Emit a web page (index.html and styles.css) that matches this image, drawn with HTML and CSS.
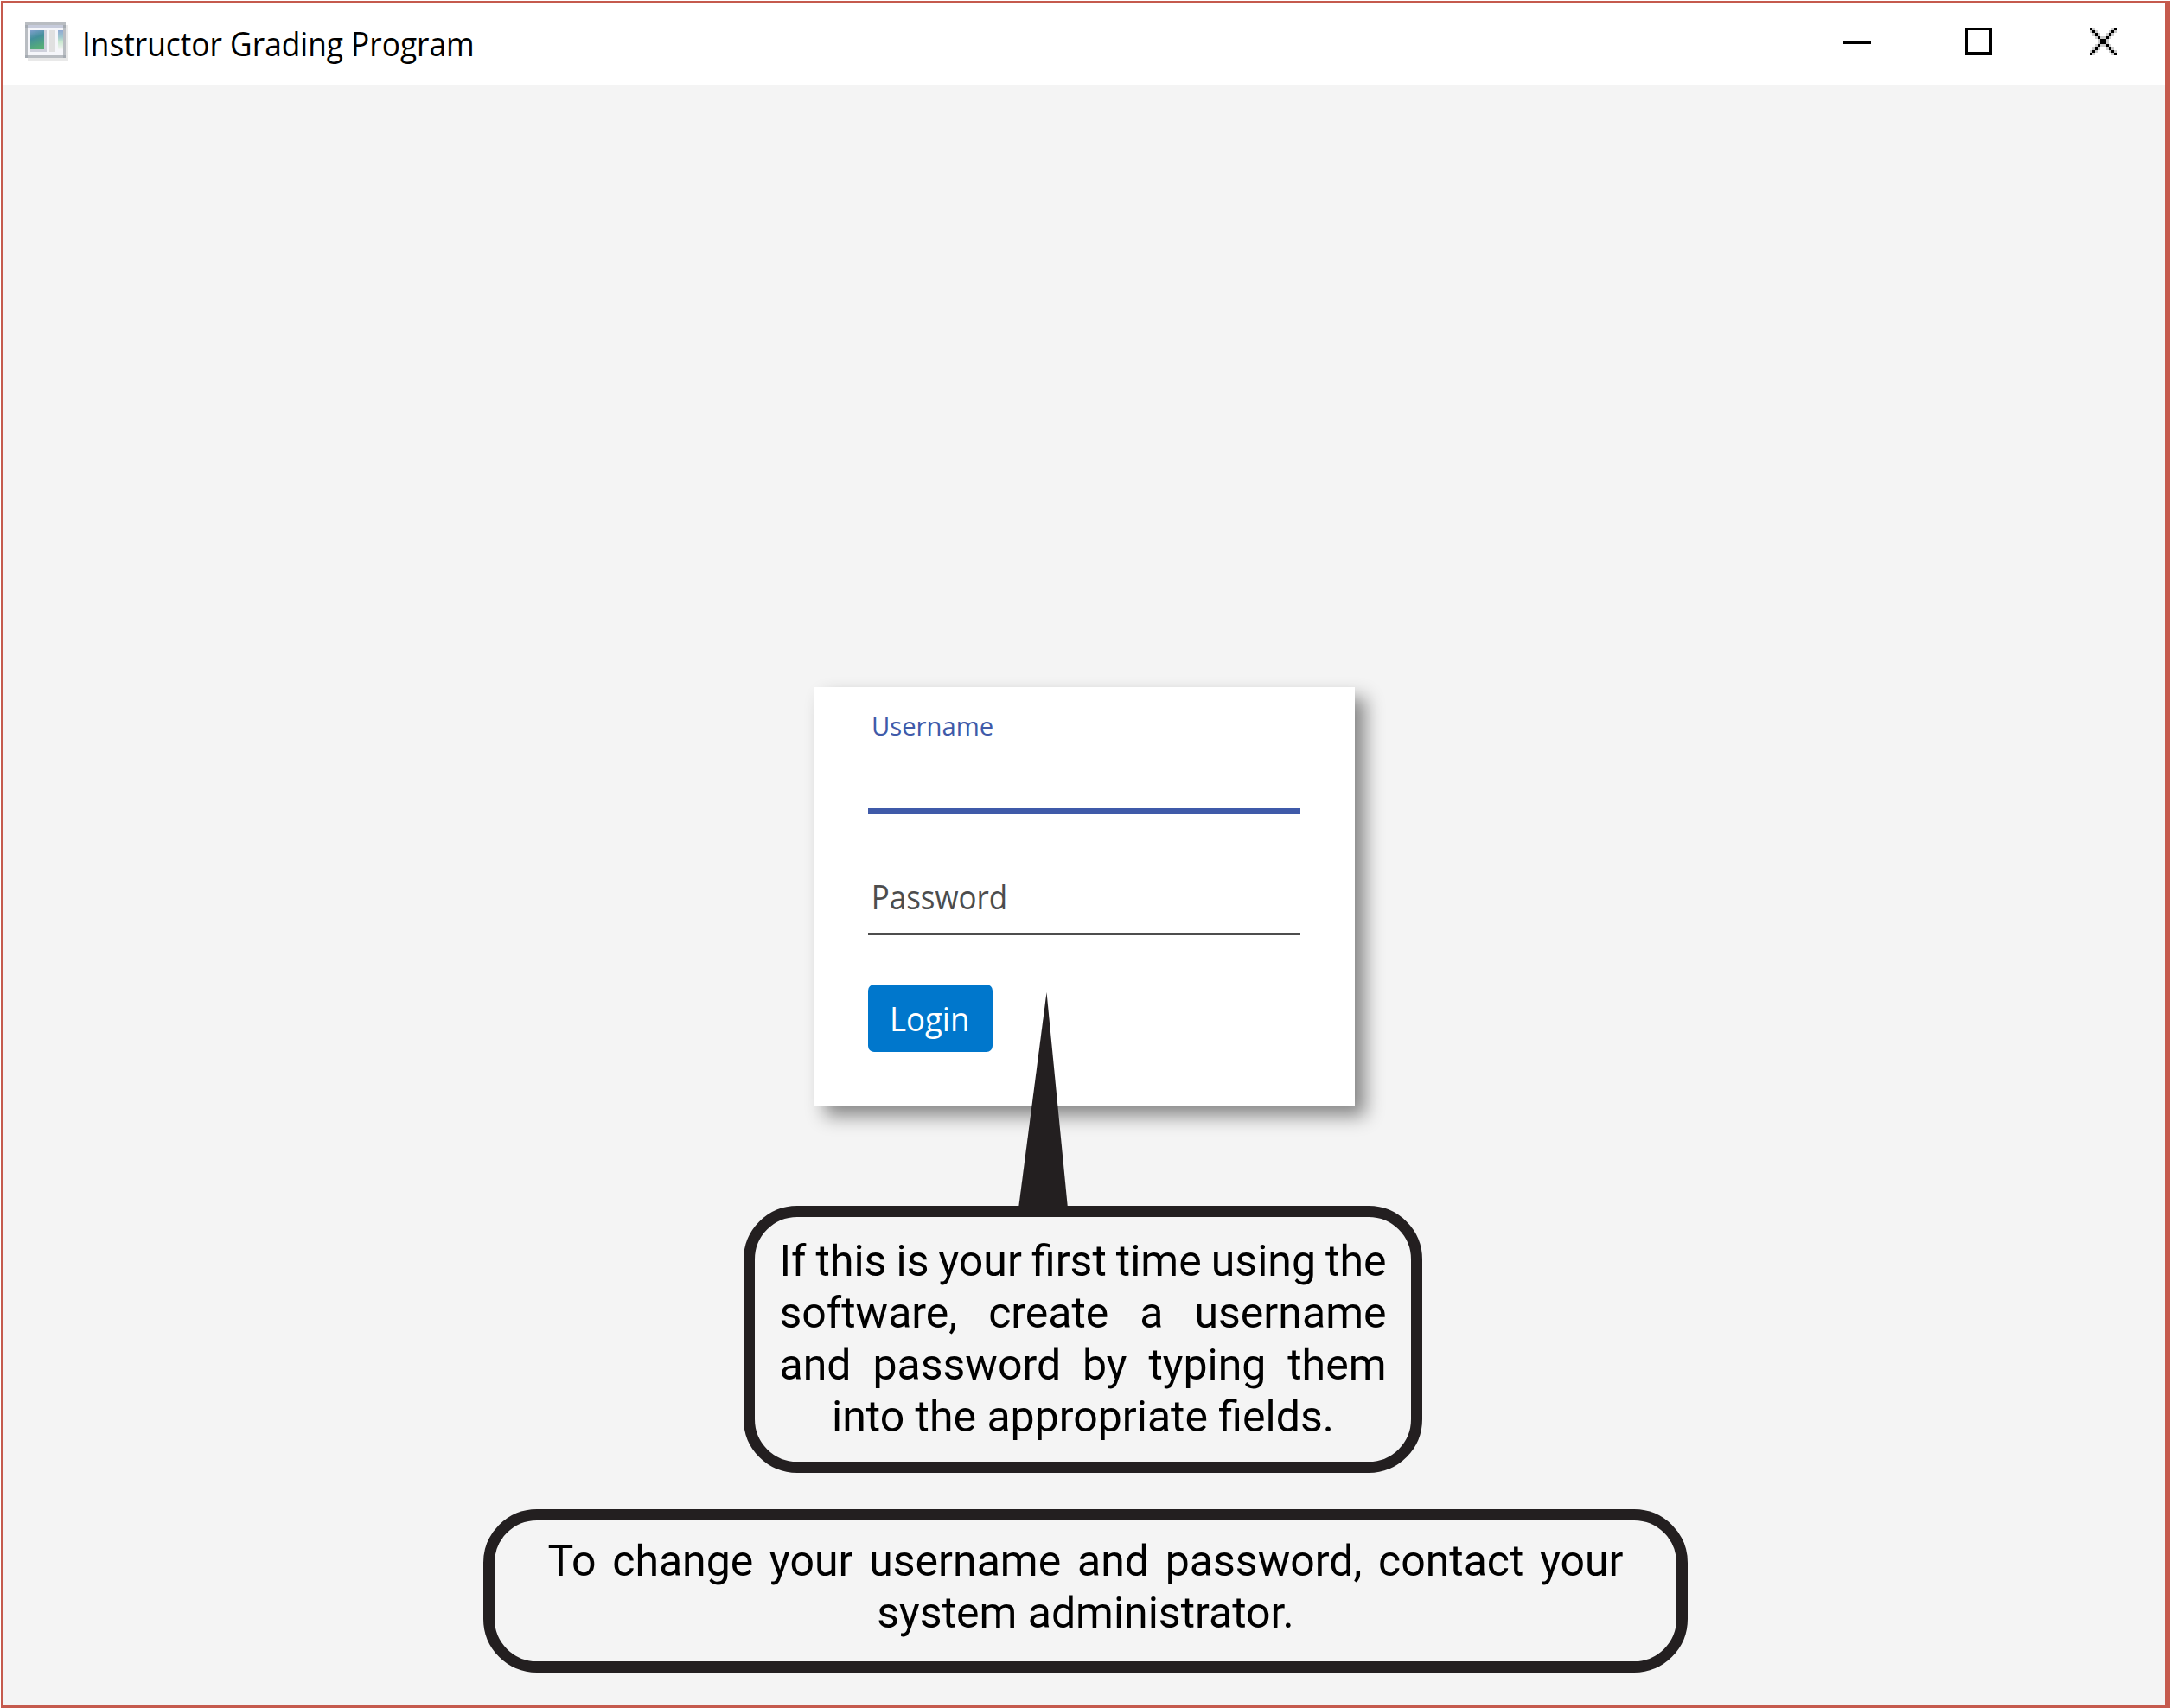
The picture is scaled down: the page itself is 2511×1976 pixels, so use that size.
FILE: index.html
```html
<!DOCTYPE html>
<html lang="en">
<head>
<meta charset="utf-8">
<title>Instructor Grading Program</title>
<link rel="stylesheet" href="styles.css">
</head>
<body>
<div class="window">
  <header class="titlebar">
    <svg class="app-icon" viewBox="0 0 50 44" aria-hidden="true">
      <defs>
        <linearGradient id="pane" x1="0" y1="0" x2=".25" y2="1">
          <stop offset="0" stop-color="#7f9fcd"/>
          <stop offset=".45" stop-color="#438f9b"/>
          <stop offset="1" stop-color="#55ad78"/>
        </linearGradient>
        <linearGradient id="strip" x1="0" y1="0" x2="0" y2="1">
          <stop offset="0" stop-color="#8fa9d2"/>
          <stop offset=".35" stop-color="#9fc7cf"/>
          <stop offset=".6" stop-color="#c9e8cf"/>
          <stop offset="1" stop-color="#f4f4f4"/>
        </linearGradient>
      </defs>
      <path fill="#e9e9e9" d="M3 3H50V44H3z"/>
      <path fill="#b9bdc2" d="M0 0H47V41H0z"/>
      <path fill="#c6cbdb" d="M3 3H44V6H3z"/>
      <path fill="#f5f6fa" d="M3 6H44V38H3z"/>
      <path fill="url(#pane)" d="M6 9H22V31H6z"/>
      <path fill="#cfd1dc" d="M22 9H25V34H6V31H22z"/>
      <path fill="#e0e0e0" d="M28 9H35V34H28z"/>
      <path fill="url(#strip)" d="M38 9H44V31H38z"/>
      <path fill="#a5abb2" d="M0 3H3V6H0zM44 3H47V6H44zM0 38H3V41H0zM44 38H47V41H44z"/>
    </svg>
    <h1 class="title">Instructor Grading Program</h1>
    <div class="controls">
      <svg class="control minimize" viewBox="0 0 32 32" shape-rendering="crispEdges"><path d="M0 16H32V19H0z"/></svg>
      <svg class="control maximize" viewBox="0 0 32 32" shape-rendering="crispEdges"><path fill-rule="evenodd" d="M0 0H31V32H0zM3 3V28H28V3z"/></svg>
      <svg class="control close" viewBox="0 0 10 10" preserveAspectRatio="none" shape-rendering="crispEdges">
        <path fill="#cbcbcb" d="M0 0h2v1h-2zM8 0h2v1h-2zM0 1h3v1h-3zM7 1h3v1h-3zM1 2h3v1h-3zM6 2h3v1h-3zM2 3h6v1h-6zM3 4h4v2h-4zM2 6h6v1h-6zM1 7h3v1h-3zM6 7h3v1h-3zM0 8h3v1h-3zM7 8h3v1h-3zM0 9h2v1h-2zM8 9h2v1h-2z"/>
        <path d="M0 0h1v1h-1zM9 0h1v1h-1zM1 1h1v1h-1zM8 1h1v1h-1zM2 2h1v1h-1zM7 2h1v1h-1zM3 3h1v1h-1zM6 3h1v1h-1zM4 4h2v2h-2zM3 6h1v1h-1zM6 6h1v1h-1zM2 7h1v1h-1zM7 7h1v1h-1zM1 8h1v1h-1zM8 8h1v1h-1zM0 9h1v1h-1zM9 9h1v1h-1z"/>
      </svg>
    </div>
  </header>
  <main class="content">
    <form class="card">
      <label class="label username">Username</label>
      <div class="line active"></div>
      <label class="label password">Password</label>
      <div class="line"></div>
      <button class="login" type="button"><span class="login-text">Login</span></button>
    </form>
    <div class="callout first">
      <svg class="pointer" viewBox="0 0 57 250"><path d="M32.500 0L57 250H0z"/></svg>
      <p class="note"><span class="tight">If this is your first time using the</span> software, create a username and password by typing them into the appropriate fields.</p>
    </div>
    <div class="callout second">
      <p class="note">To change your username and password, contact your system administrator.</p>
    </div>
  </main>
</div>
</body>
</html>
```
FILE: styles.css
```css
* { box-sizing: border-box; }

body {
  margin: 0;
  padding: 1px 1px 0;
  height: 1976px;
  background: #fff;
  overflow: hidden;
}

.window {
  height: 1975px;
  border: 3px solid #c55a4d;
  border-right-width: 6px;
  background: #f4f4f4;
  display: flex;
  flex-direction: column;
}

.titlebar {
  flex: none;
  height: 94px;
  padding: 0 56px 0 25px;
  background: #fff;
  display: flex;
  align-items: flex-start;
}

.app-icon { width: 50px; height: 44px; margin-top: 22px; }

.title {
  margin: 19px 0 0 16px;
  font: 400 39px/54px "Open Sans", sans-serif;
  white-space: nowrap;
  color: #000;
  transform: scaleX(.904);
  transform-origin: left;
}

.controls { display: flex; margin: 28px 0 0 auto; }
.control { width: 32px; height: 32px; }
.minimize { margin-right: 109px; }
.maximize { margin-right: 112px; }
.close { width: 31px; }

.content {
  flex: 1;
  display: flex;
  flex-direction: column;
  align-items: center;
  padding-top: 697px;
}

.card {
  flex: none;
  width: 625px;
  height: 484px;
  padding: 25px 63px 0 62px;
  background: #fff;
  box-shadow: 12px 12px 20px rgba(0, 0, 0, .45);
  display: flex;
  flex-direction: column;
  align-items: flex-start;
}

.label {
  font-family: "Open Sans", sans-serif;
  transform-origin: left;
  white-space: nowrap;
}
.username { height: 115px; padding-left: 4px; font-size: 30px; line-height: 40px; color: #3f5aa9; transform: scaleX(.975); }
.password { height: 137px; padding: 69px 0 0 4px; font-size: 38px; line-height: 52px; color: #4d4d4d; transform: scaleX(.92); }

.line { width: 500px; height: 3px; background: #4d4d4d; }
.line.active { height: 7px; background: #3f5aa9; }

.login {
  width: 144px;
  height: 78px;
  margin-top: 57px;
  padding: 0;
  border: 0;
  border-radius: 7px;
  background: #0077cc;
  color: #fff;
  font: 400 38px/78px "Open Sans", sans-serif;
}
.login-text { display: inline-block; transform: scaleX(.96); }

.callout {
  position: relative;
  flex: none;
  border: 13px solid #231f20;
  border-radius: 62px;
}
.first { width: 785px; height: 309px; margin: 116px 4px 0 0; padding: 21px 28px 0 29px; }
.second { width: 1393px; height: 189px; margin: 42px 0 0 2px; padding: 17px 61px 0 62px; }

.pointer {
  position: absolute;
  left: 305px;
  top: -260px;
  width: 57px;
  height: 250px;
  fill: #231f20;
}

.note {
  margin: 0;
  font: 400 50px/60px Roboto, sans-serif;
  color: #000;
  text-align: justify;
  text-align-last: center;
}
.tight { word-spacing: -4px; }
```
